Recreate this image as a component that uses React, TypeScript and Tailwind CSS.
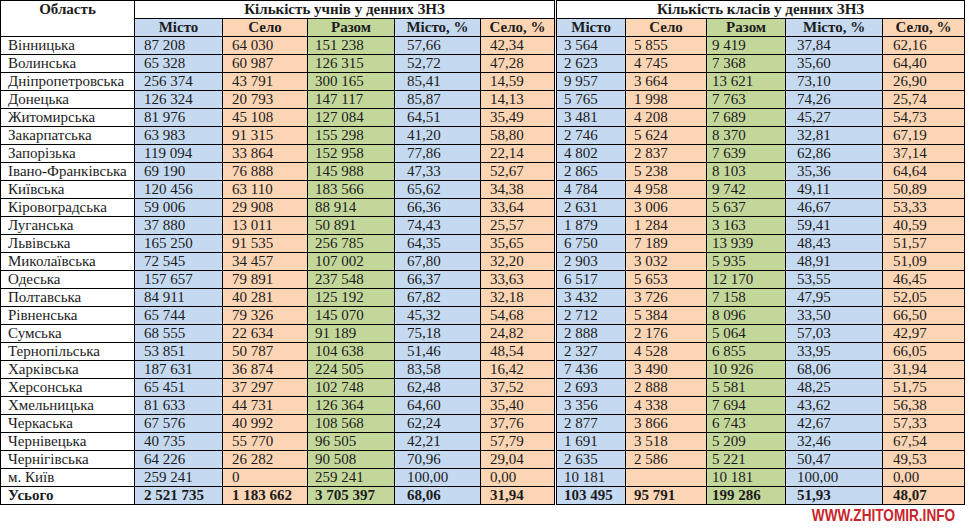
import React from "react";

const rows: string[][] = [
  ["Вінницька", "87 208", "64 030", "151 238", "57,66", "42,34", "3 564", "5 855", "9 419", "37,84", "62,16"],
  ["Волинська", "65 328", "60 987", "126 315", "52,72", "47,28", "2 623", "4 745", "7 368", "35,60", "64,40"],
  ["Дніпропетровська", "256 374", "43 791", "300 165", "85,41", "14,59", "9 957", "3 664", "13 621", "73,10", "26,90"],
  ["Донецька", "126 324", "20 793", "147 117", "85,87", "14,13", "5 765", "1 998", "7 763", "74,26", "25,74"],
  ["Житомирська", "81 976", "45 108", "127 084", "64,51", "35,49", "3 481", "4 208", "7 689", "45,27", "54,73"],
  ["Закарпатська", "63 983", "91 315", "155 298", "41,20", "58,80", "2 746", "5 624", "8 370", "32,81", "67,19"],
  ["Запорізька", "119 094", "33 864", "152 958", "77,86", "22,14", "4 802", "2 837", "7 639", "62,86", "37,14"],
  ["Івано-Франківська", "69 190", "76 888", "145 988", "47,33", "52,67", "2 865", "5 238", "8 103", "35,36", "64,64"],
  ["Київська", "120 456", "63 110", "183 566", "65,62", "34,38", "4 784", "4 958", "9 742", "49,11", "50,89"],
  ["Кіровоградська", "59 006", "29 908", "88 914", "66,36", "33,64", "2 631", "3 006", "5 637", "46,67", "53,33"],
  ["Луганська", "37 880", "13 011", "50 891", "74,43", "25,57", "1 879", "1 284", "3 163", "59,41", "40,59"],
  ["Львівська", "165 250", "91 535", "256 785", "64,35", "35,65", "6 750", "7 189", "13 939", "48,43", "51,57"],
  ["Миколаївська", "72 545", "34 457", "107 002", "67,80", "32,20", "2 903", "3 032", "5 935", "48,91", "51,09"],
  ["Одеська", "157 657", "79 891", "237 548", "66,37", "33,63", "6 517", "5 653", "12 170", "53,55", "46,45"],
  ["Полтавська", "84 911", "40 281", "125 192", "67,82", "32,18", "3 432", "3 726", "7 158", "47,95", "52,05"],
  ["Рівненська", "65 744", "79 326", "145 070", "45,32", "54,68", "2 712", "5 384", "8 096", "33,50", "66,50"],
  ["Сумська", "68 555", "22 634", "91 189", "75,18", "24,82", "2 888", "2 176", "5 064", "57,03", "42,97"],
  ["Тернопільська", "53 851", "50 787", "104 638", "51,46", "48,54", "2 327", "4 528", "6 855", "33,95", "66,05"],
  ["Харківська", "187 631", "36 874", "224 505", "83,58", "16,42", "7 436", "3 490", "10 926", "68,06", "31,94"],
  ["Херсонська", "65 451", "37 297", "102 748", "62,48", "37,52", "2 693", "2 888", "5 581", "48,25", "51,75"],
  ["Хмельницька", "81 633", "44 731", "126 364", "64,60", "35,40", "3 356", "4 338", "7 694", "43,62", "56,38"],
  ["Черкаська", "67 576", "40 992", "108 568", "62,24", "37,76", "2 877", "3 866", "6 743", "42,67", "57,33"],
  ["Чернівецька", "40 735", "55 770", "96 505", "42,21", "57,79", "1 691", "3 518", "5 209", "32,46", "67,54"],
  ["Чернігівська", "64 226", "26 282", "90 508", "70,96", "29,04", "2 635", "2 586", "5 221", "50,47", "49,53"],
  ["м. Київ", "259 241", "0", "259 241", "100,00", "0,00", "10 181", "", "10 181", "100,00", "0,00"],
];

const total = ["Усього", "2 521 735", "1 183 662", "3 705 397", "68,06", "31,94", "103 495", "95 791", "199 286", "51,93", "48,07"];

const widths = [134, 88, 85, 87, 86, 75, 70, 81, 79, 97, 82];

const bg = [
  "bg-white",
  "bg-[#c5d9f1]",
  "bg-[#fcd5b4]",
  "bg-[#c4d79b]",
  "bg-[#c5d9f1]",
  "bg-[#fcd5b4]",
  "bg-[#c5d9f1]",
  "bg-[#fcd5b4]",
  "bg-[#c4d79b]",
  "bg-[#c5d9f1]",
  "bg-[#fcd5b4]",
];

const pad = [
  "pl-[7px]",
  "pl-[9px]",
  "pl-[9px]",
  "pl-[7px]",
  "pl-[12px]",
  "pl-[9px]",
  "pl-[7px]",
  "pl-[8px]",
  "pl-[5px]",
  "pl-[11px]",
  "pl-[10px]",
];

const subHeads = ["Місто", "Село", "Разом", "Місто, %", "Село, %", "Місто", "Село", "Разом", "Місто, %", "Село, %"];

function cellCls(i: number) {
  const base = "h-[18px] p-0 border border-black whitespace-nowrap overflow-hidden";
  const dbl = i === 5 ? " border-r-[3px] border-double" : "";
  return `${base} ${bg[i]} ${pad[i]}${dbl}`;
}

export default function App() {
  return (
    <div
      className="w-[969px] h-[528px] bg-white text-[#1c1c1c] overflow-hidden"
      style={{ fontFamily: '"Liberation Serif", "Times New Roman", serif' }}
    >
      <table className="table-fixed border-collapse w-[965px] text-[15px] leading-[17px]">
        <colgroup>
          {widths.map((w, i) => (
            <col key={i} style={{ width: w }} />
          ))}
        </colgroup>
        <thead>
          <tr>
            <th
              rowSpan={2}
              className="p-0 border border-black bg-white align-top text-center font-bold h-[17px]"
            >
              Область
            </th>
            <th
              colSpan={5}
              className="h-[17px] p-0 border border-black border-r-[3px] border-double bg-white text-center font-bold"
            >
              Кількість учнів у денних ЗНЗ
            </th>
            <th colSpan={5} className="h-[17px] p-0 border border-black bg-white text-center font-bold">
              Кількість класів у денних ЗНЗ
            </th>
          </tr>
          <tr>
            {subHeads.map((h, j) => {
              const i = j + 1;
              const dbl = i === 5 ? " border-r-[3px] border-double" : "";
              return (
                <th key={j} className={`h-[18px] p-0 border border-black text-center font-bold ${bg[i]}${dbl}`}>
                  {h}
                </th>
              );
            })}
          </tr>
        </thead>
        <tbody>
          {rows.map((r, ri) => (
            <tr key={ri}>
              {r.map((c, i) => (
                <td key={i} className={cellCls(i)}>
                  {c}
                </td>
              ))}
            </tr>
          ))}
          <tr>
            {total.map((c, i) => (
              <td key={i} className={`${cellCls(i)} font-bold`}>
                {c}
              </td>
            ))}
          </tr>
        </tbody>
      </table>
      <div className="flex justify-end pr-[14px] pt-[2px]">
        <span
          className="inline-block origin-right scale-x-[0.8] text-[17px] leading-none font-bold text-[#c9252c]"
          style={{ fontFamily: '"Liberation Sans Narrow", "Liberation Sans", Arial, sans-serif' }}
        >
          WWW.ZHITOMIR.INFO
        </span>
      </div>
    </div>
  );
}
